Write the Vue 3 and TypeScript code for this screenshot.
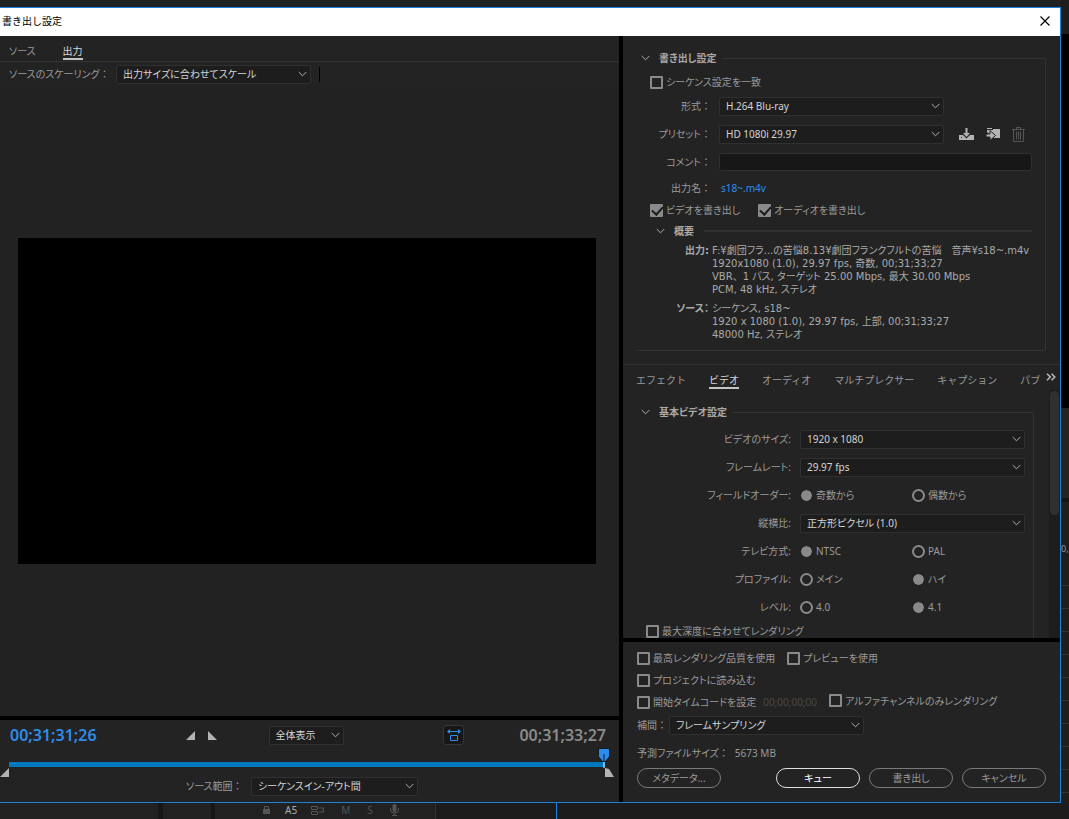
<script setup lang="ts">
import { ref } from 'vue'

interface RadioRow {
  label: string
  name: string
  options: string[]
  value: string
}

const tabs = ['エフェクト', 'ビデオ', 'オーディオ', 'マルチプレクサー', 'キャプション', 'パブ']
const activeTab = ref('ビデオ')
const comment = ref('')
const exportVideo = ref(true)
const exportAudio = ref(true)

const fieldOrder = ref<RadioRow>({ label: 'フィールドオーダー:', name: 'order', options: ['奇数から', '偶数から'], value: '奇数から' })
const radioRows = ref<RadioRow[]>([
  { label: 'テレビ方式:', name: 'tv', options: ['NTSC', 'PAL'], value: 'NTSC' },
  { label: 'プロファイル:', name: 'profile', options: ['メイン', 'ハイ'], value: 'ハイ' },
  { label: 'レベル:', name: 'level', options: ['4.0', '4.1'], value: '4.1' },
])
</script>

<template>
  <div class="desktop">
    <div class="strip-top"></div>
    <main class="dialog">
      <header class="titlebar">
        <h1>書き出し設定</h1>
        <button class="close" aria-label="閉じる">
          <svg width="10" height="10" viewBox="0 0 10 10"><path d="M.5.5l9 9M9.5.5l-9 9" stroke="#000" stroke-width="1.2" /></svg>
        </button>
      </header>
      <div class="body">
        <section class="left">
          <nav class="left-tabs">
            <button>ソース</button>
            <button class="on">出力</button>
          </nav>
          <div class="scaling">
            <label for="scaling">ソースのスケーリング<span class="fw">：</span></label>
            <span class="sel scaling-sel">
              <select id="scaling"><option>出力サイズに合わせてスケール</option></select>
              <svg class="chev" width="9" height="6" viewBox="0 0 9 6"><path d="M.7 1l3.8 3.8L8.3 1" /></svg>
            </span>
            <i class="divider"></i>
          </div>
          <div class="preview"><div class="screen"></div></div>
          <div class="transport">
            <div class="controls">
              <span class="tc blue">00;31;31;26</span>
              <button class="mark in" aria-label="インポイントを設定"><svg width="9" height="9"><path d="M9 0v9H0z" fill="#b4b4b4" /></svg></button>
              <button class="mark" aria-label="アウトポイントを設定"><svg width="9" height="9"><path d="M0 0v1l8 8H0z" fill="#b4b4b4" /><path d="M0 0l9 9H0z" fill="#b4b4b4" /></svg></button>
              <span class="sel zoom-sel">
                <select aria-label="表示倍率"><option>全体表示</option></select>
                <svg class="chev" width="9" height="6" viewBox="0 0 9 6"><path d="M.7 1l3.8 3.8L8.3 1" /></svg>
              </span>
              <button class="aspect" aria-label="縦横比補正">
                <svg width="16" height="14" viewBox="0 0 16 14" fill="none" stroke="#2d8ceb"><path d="M2 3.5h12M4.500 7.500h7v5h-7z" /><path d="M1 3.500l3-2.500v5zM15 3.500l-3-2.500v5z" fill="#2d8ceb" stroke="none" /></svg>
              </button>
              <span class="tc">00;31;33;27</span>
            </div>
            <div class="timeline">
              <div class="range"></div>
              <svg class="head" width="12" height="20" viewBox="0 0 12 20"><path d="M.5.5h11v8l-4 5h-3l-4-5z" fill="#2d8ceb" stroke="#101820" /><path d="M6 6v8" stroke="#0b1f38" /><path d="M6 14v6" stroke="#fff" /></svg>
              <svg class="tri" width="9" height="9"><path d="M9 0v9H0z" fill="#b4b4b4" /></svg>
              <svg class="tri end" width="9" height="9"><path d="M0 0l4 1 5 8H0z" fill="#b4b4b4" /></svg>
            </div>
            <div class="source-range">
              <label for="range">ソース範囲<span class="fw">：</span></label>
              <span class="sel range-sel">
                <select id="range"><option>シーケンスイン-アウト間</option></select>
                <svg class="chev" width="9" height="6" viewBox="0 0 9 6"><path d="M.7 1l3.8 3.8L8.3 1" /></svg>
              </span>
            </div>
          </div>
        </section>

        <section class="right">
          <div class="settings">
            <fieldset class="box">
              <legend><svg class="fold" width="9" height="6" viewBox="0 0 9 6"><path d="M.7 1l3.8 3.8L8.3 1" /></svg>書き出し設定</legend>
              <div class="checks">
                <label class="check"><input type="checkbox" />シーケンス設定を一致</label>
              </div>
              <div class="row">
                <label class="lab" for="format">形式<span class="fw">：</span></label>
                <span class="sel wide">
                  <select id="format"><option>H.264 Blu-ray</option></select>
                  <svg class="chev" width="9" height="6" viewBox="0 0 9 6"><path d="M.7 1l3.8 3.8L8.3 1" /></svg>
                </span>
              </div>
              <div class="row">
                <label class="lab" for="preset">プリセット<span class="fw">：</span></label>
                <span class="sel wide">
                  <select id="preset"><option>HD 1080i 29.97</option></select>
                  <svg class="chev" width="9" height="6" viewBox="0 0 9 6"><path d="M.7 1l3.8 3.8L8.3 1" /></svg>
                </span>
                <div class="tools">
                  <button aria-label="プリセットを保存"><svg width="15" height="14" viewBox="0 0 15 14" fill="#b4b4b4"><path d="M0 8h4l3.500 3.500L11 8h4v5H0z" /><path d="M6.500 1h2v5h2.500l-3.500 4-3.500-4h2.500z" /><path d="M2 10h1v1H2z" fill="#232323" /></svg></button>
                  <button aria-label="プリセットを読み込み"><svg width="14" height="14" viewBox="0 0 14 14" fill="#b4b4b4"><path d="M1 1h5v1H1zM1 3h6V2h7v9H8L1 5z" /><path d="M0 7h4V3.500L9.500 8.500 4 13.500V10H0z" stroke="#232323" /></svg></button>
                  <button aria-label="プリセットを削除" disabled><svg width="13" height="15" viewBox="0 0 13 15" fill="none" stroke="#555"><path d="M0 2.500h13M4.500 2V.5h4V2M1.500 3v11.500h10V3M4.500 4.500v8M6.500 4.500v8M8.500 4.500v8" /></svg></button>
                </div>
              </div>
              <div class="row">
                <label class="lab" for="comment">コメント<span class="fw">：</span></label>
                <input id="comment" v-model="comment" class="text" type="text" />
              </div>
              <div class="row short">
                <span class="lab">出力名<span class="fw">：</span></span>
                <a href="#">s18~.m4v</a>
              </div>
              <div class="checks">
                <label class="check"><input v-model="exportVideo" type="checkbox" />ビデオを書き出し</label>
                <label class="check"><input v-model="exportAudio" type="checkbox" />オーディオを書き出し</label>
              </div>
              <div class="summary-head">
                <svg class="fold" width="9" height="6" viewBox="0 0 9 6"><path d="M.7 1l3.8 3.8L8.3 1" /></svg>
                <b>概要</b><i></i>
              </div>
              <dl class="summary">
                <dt>出力:</dt>
                <dd>F:¥劇団フラ...の苦悩8.13¥劇団フランクフルトの苦悩　音声¥s18~.m4v<br />1920x1080 (1.0), 29.97 fps, 奇数, 00;31;33;27<br />VBR<span class="fw">、</span>1 パス, ターゲット 25.00 Mbps, 最大 30.00 Mbps<br />PCM, 48 kHz, ステレオ</dd>
                <dt>ソース：</dt>
                <dd>シーケンス, s18~<br />1920 x 1080 (1.0), 29.97 fps, 上部, 00;31;33;27<br />48000 Hz, ステレオ</dd>
              </dl>
            </fieldset>

            <nav class="tabs">
              <div class="tab-list">
                <button v-for="t in tabs" :key="t" :class="{ on: t === activeTab }" @click="activeTab = t">{{ t }}</button>
              </div>
              <button class="more" aria-label="その他のタブ"><svg width="10" height="8" viewBox="0 0 10 8" fill="none" stroke="#b8b8b8" stroke-width="1.600"><path d="M1 .7L4.300 4 1 7.300M5.500 .7L8.800 4 5.500 7.300" /></svg></button>
            </nav>

            <div class="scroll">
              <fieldset class="box video">
                <legend><svg class="fold" width="9" height="6" viewBox="0 0 9 6"><path d="M.7 1l3.8 3.8L8.3 1" /></svg>基本ビデオ設定</legend>
                <div class="row">
                  <label class="lab" for="size">ビデオのサイズ:</label>
                  <span class="sel wide">
                    <select id="size"><option>1920 x 1080</option></select>
                    <svg class="chev" width="9" height="6" viewBox="0 0 9 6"><path d="M.7 1l3.8 3.8L8.3 1" /></svg>
                  </span>
                </div>
                <div class="row">
                  <label class="lab" for="fps">フレームレート:</label>
                  <span class="sel wide">
                    <select id="fps"><option>29.97 fps</option></select>
                    <svg class="chev" width="9" height="6" viewBox="0 0 9 6"><path d="M.7 1l3.8 3.8L8.3 1" /></svg>
                  </span>
                </div>
                <div class="row">
                  <span class="lab">{{ fieldOrder.label }}</span>
                  <label v-for="o in fieldOrder.options" :key="o" class="radio"><input v-model="fieldOrder.value" type="radio" :name="fieldOrder.name" :value="o" />{{ o }}</label>
                </div>
                <div class="row">
                  <label class="lab" for="aspect">縦横比:</label>
                  <span class="sel wide">
                    <select id="aspect"><option>正方形ピクセル (1.0)</option></select>
                    <svg class="chev" width="9" height="6" viewBox="0 0 9 6"><path d="M.7 1l3.8 3.8L8.3 1" /></svg>
                  </span>
                </div>
                <div v-for="r in radioRows" :key="r.name" class="row">
                  <span class="lab">{{ r.label }}</span>
                  <label v-for="o in r.options" :key="o" class="radio"><input v-model="r.value" type="radio" :name="r.name" :value="o" />{{ o }}</label>
                </div>
                <div class="checks depth">
                  <label class="check"><input type="checkbox" />最大深度に合わせてレンダリング</label>
                </div>
              </fieldset>
              <div class="track"><div class="thumb"></div></div>
            </div>
          </div>

          <footer class="actions">
            <div class="checks">
              <label class="check"><input type="checkbox" />最高レンダリング品質を使用</label>
              <label class="check"><input type="checkbox" />プレビューを使用</label>
            </div>
            <div class="checks">
              <label class="check"><input type="checkbox" />プロジェクトに読み込む</label>
            </div>
            <div class="checks">
              <label class="check"><input type="checkbox" />開始タイムコードを設定</label>
              <span class="dim">00;00;00;00</span>
              <label class="check alpha"><input type="checkbox" />アルファチャンネルのみレンダリング</label>
            </div>
            <div class="interp">
              <label for="interp">補間<span class="fw">：</span></label>
              <span class="sel interp-sel">
                <select id="interp"><option>フレームサンプリング</option></select>
                <svg class="chev" width="9" height="6" viewBox="0 0 9 6"><path d="M.7 1l3.8 3.8L8.3 1" /></svg>
              </span>
            </div>
            <div class="filesize"><span>予測ファイルサイズ<span class="fw">：</span></span><span>5673 MB</span></div>
            <div class="buttons">
              <button class="pill meta">メタデータ...</button>
              <button class="pill primary">キュー</button>
              <button class="pill">書き出し</button>
              <button class="pill">キャンセル</button>
            </div>
          </footer>
        </section>
      </div>
    </main>

    <aside class="strip-right">
      <div class="black"></div>
      <div class="mini"></div>
      <div class="ruler">0,</div>
      <div v-for="n in 10" :key="n" class="lane"></div>
    </aside>

    <div class="strip-bottom">
      <div class="cell a"></div>
      <div class="cell b"></div>
      <div class="cell c">
        <svg width="9" height="10" viewBox="0 0 9 10"><path d="M1 4h7v5H1z" fill="#555" /><path d="M2.500 4V1.500h4V4" fill="none" stroke="#555" /></svg>
        <span class="track-name">A5</span>
        <svg width="13" height="9" viewBox="0 0 13 9" fill="none" stroke="#555"><path d="M.5.5h6v3h-6zM.5 5.500h6v3h-6zM8 2h4.500v4H8" /></svg>
        <span>M</span>
        <span>S</span>
        <svg width="9" height="12" viewBox="0 0 9 12"><rect x="2.500" width="4" height="8" rx="2" fill="#555" /><path d="M.5 4v2q0 3 4 3t4-3V4M4.500 9v3M2 11.500h5" fill="none" stroke="#555" /></svg>
      </div>
      <div class="cell d"></div>
      <div class="cell e"></div>
    </div>
  </div>
</template>

<style>
html,
body {
  background: #1e1e1e;
}
</style>

<style scoped>
* {
  box-sizing: border-box;
}
.desktop {
  display: grid;
  grid-template-columns: 1fr 8px;
  grid-template-rows: 7px 1fr 16px;
  height: 100vh;
  min-height: 700px;
  background: #1e1e1e;
  color: #9a9a9a;
  font-family: "Noto Sans", "Noto Sans CJK JP", sans-serif;
  font-feature-settings: "palt";
  font-size: 10px;
  line-height: 14px;
  overflow: hidden;
}
button,
input,
select {
  font: inherit;
  font-feature-settings: inherit;
  color: inherit;
  margin: 0;
}
button {
  padding: 0;
  border: 0;
  background: none;
  white-space: nowrap;
}
label,
span {
  white-space: nowrap;
}
svg {
  display: block;
}
.fw {
  font-feature-settings: normal;
}
.strip-top {
  background: #222;
}
.dialog {
  grid-column: 1;
  grid-row: 2;
  min-height: 0;
  display: flex;
  flex-direction: column;
  border: solid #1d82dc;
  border-width: 1px 1px 1px 0;
  background: #000;
}
.titlebar {
  flex: none;
  height: 28px;
  display: flex;
  align-items: center;
  justify-content: space-between;
  padding: 0 10px 2px 2px;
  background: #fff;
  color: #000;
}
h1 {
  margin: 0;
  font-size: 10px;
  font-weight: 400;
  font-feature-settings: normal;
}
.body {
  flex: 1;
  min-height: 0;
  display: flex;
  gap: 4px;
}
.left {
  flex: 1;
  min-width: 0;
  display: flex;
  flex-direction: column;
}
.right {
  flex: none;
  width: 437px;
  display: flex;
  flex-direction: column;
  gap: 4px;
}
.left-tabs {
  flex: none;
  display: flex;
  gap: 27px;
  height: 26px;
  padding: 7px 9px 0;
  border-bottom: 1px solid #333;
  background: #232323;
}
.left-tabs button {
  height: 17px;
  border-bottom: 2px solid transparent;
}
.left-tabs .on,
.tabs .on {
  color: #d8d8d8;
  border-bottom-color: #c4c4c4;
}
.scaling {
  flex: none;
  display: flex;
  align-items: center;
  height: 24px;
  padding-left: 9px;
  background: #232323;
}
.scaling label {
  width: 107px;
}
.divider {
  width: 1px;
  height: 15px;
  margin-left: 8px;
  background: #000;
}
.sel {
  position: relative;
  display: block;
  height: 19px;
}
.sel select {
  appearance: none;
  display: block;
  width: 100%;
  height: 100%;
  padding: 0 20px 0 6px;
  border: 1px solid #303030;
  border-radius: 2px;
  background: #1d1d1d;
  color: #d4d4d4;
}
.chev {
  position: absolute;
  right: 4px;
  top: 6px;
  pointer-events: none;
}
.chev path,
.fold path {
  fill: none;
  stroke: #b0b0b0;
}
.scaling-sel {
  width: 195px;
}
.preview {
  flex: 1;
  min-height: 0;
  display: flex;
  align-items: center;
  padding: 0 23px 0 18px;
  background: #222;
}
.screen {
  width: 100%;
  aspect-ratio: 16 / 9;
  background: #000;
}
.transport {
  flex: none;
  height: 82px;
  margin-top: 4px;
  background: #232323;
}
.controls {
  display: flex;
  align-items: center;
  height: 30px;
  padding: 0 13px 0 10px;
}
.tc {
  font-size: 16px;
  font-weight: 600;
  line-height: 20px;
  color: #8a8a8a;
}
.tc.blue {
  color: #2d8ceb;
}
.mark {
  margin-right: 13px;
}
.mark.in {
  margin-left: 89px;
}
.zoom-sel {
  width: 75px;
  margin-left: 39px;
}
.aspect {
  width: 21px;
  height: 20px;
  display: grid;
  place-items: center;
  margin: 0 55px 0 auto;
  border: 1px solid #363636;
  border-radius: 3px;
  background: #171717;
}
.timeline {
  position: relative;
  height: 26px;
  padding: 12px 14px 0 9px;
}
.range {
  height: 5px;
  background: #0078bd;
}
.head {
  position: absolute;
  right: 9px;
  top: -2px;
}
.tri {
  position: absolute;
  left: 0;
  top: 18px;
}
.tri.end {
  left: auto;
  right: 5px;
}
.source-range {
  display: flex;
  align-items: center;
  height: 20px;
  padding-left: 186px;
}
.source-range label {
  width: 65px;
}
.range-sel {
  width: 167px;
}
.settings {
  flex: 1;
  min-height: 0;
  display: flex;
  flex-direction: column;
  padding-top: 14px;
  background: #232323;
}
.box {
  flex: none;
  min-width: 0;
  margin: 0 14px 0 13px;
  padding: 6px 13px 9px 14px;
  border: 1px solid #333;
  border-left: 0;
  border-radius: 2px;
}
legend {
  display: flex;
  align-items: center;
  gap: 9px;
  height: 16px;
  margin-left: -14px;
  padding: 0 6px 0 5px;
  font-weight: 700;
  color: #a8a8a8;
}
.checks {
  display: flex;
  align-items: center;
  gap: 18px;
  height: 20px;
}
.check {
  display: flex;
  align-items: center;
  gap: 3px;
}
.check input {
  appearance: none;
  width: 13px;
  height: 13px;
  border: 2px solid #8a8a8a;
  border-radius: 1px;
}
.check input:checked {
  display: grid;
  place-items: center;
  background: #8a8a8a;
}
.check input:checked::after {
  content: "";
  width: 9px;
  height: 5px;
  margin-bottom: 4px;
  border: solid #1c1c1c;
  border-width: 0 0 2px 2px;
  transform: rotate(-48deg);
}
.row {
  display: flex;
  align-items: center;
  height: 28px;
}
.row.short {
  height: 24px;
}
.lab {
  flex: none;
  width: 61px;
  margin-right: 8px;
  text-align: right;
}
.wide {
  flex: none;
  width: 225px;
}
.tools {
  display: flex;
  align-items: center;
  gap: 12px;
  margin-left: 15px;
}
.text {
  flex: 1;
  min-width: 0;
  height: 18px;
  padding: 0 5px;
  border: 1px solid #303030;
  border-radius: 3px;
  background: #171717;
}
a {
  margin-left: 2px;
  color: #2d8ceb;
  text-decoration: none;
}
.summary-head {
  display: flex;
  align-items: center;
  height: 22px;
  padding-left: 6px;
}
.summary-head b {
  margin: 0 10px 0 9px;
  color: #a8a8a8;
}
.summary-head i {
  flex: 1;
  height: 2px;
  background: #303030;
}
.summary {
  display: grid;
  grid-template-columns: 59px 1fr;
  column-gap: 3px;
  row-gap: 6px;
  margin: 2px -13px 0 0;
  font-family: "DejaVu Sans", "Noto Sans CJK JP", sans-serif;
  line-height: 13px;
  color: #aaa;
  white-space: nowrap;
}
.summary dt {
  font-weight: 700;
  text-align: right;
}
.summary dd {
  margin: 0;
}
.tabs {
  flex: none;
  display: flex;
  align-items: flex-start;
  gap: 5px;
  height: 26px;
  margin-top: 13px;
  padding: 0 4px 0 13px;
  border-top: 1px solid #303030;
}
.tab-list {
  flex: 1;
  min-width: 0;
  display: flex;
  gap: 23px;
  padding-top: 7px;
  font-feature-settings: normal;
}
.tab-list button {
  height: 17px;
  border-bottom: 2px solid transparent;
}
.more {
  padding-top: 8px;
}
.scroll {
  flex: 1;
  min-height: 0;
  display: flex;
  align-items: flex-start;
  padding-top: 14px;
  overflow: hidden;
}
.video {
  flex: 1;
  margin-right: 15px;
  padding: 5px 9px 40px 10px;
}
.video legend {
  margin-left: -10px;
}
.video .lab {
  width: 145px;
  margin-right: 9px;
}
.radio {
  display: flex;
  align-items: center;
  gap: 3px;
  width: 114px;
}
.radio input {
  appearance: none;
  width: 13px;
  height: 13px;
  border: 2px solid #8a8a8a;
  border-radius: 50%;
}
.radio input:checked {
  border-width: 1px;
  border-color: #232323;
  background: #8a8a8a;
  background-clip: padding-box;
}
.track {
  width: 11px;
  height: 2000px;
  margin-top: -14px;
  padding: 1px;
  background: #1d1d1d;
}
.thumb {
  height: 124px;
  border-radius: 5px;
  background: #303030;
}
.actions {
  flex: none;
  height: 160px;
  padding: 5px 14px 0;
  background: #232323;
}
.actions .checks {
  height: 22px;
  gap: 12px;
}
.dim {
  margin-left: -5px;
  color: #484848;
}
.alpha {
  padding-bottom: 3px;
}
.interp {
  display: flex;
  align-items: center;
  height: 24px;
}
.interp label {
  width: 32px;
}
.interp-sel {
  width: 195px;
}
.filesize {
  display: flex;
  align-items: center;
  gap: 6px;
  height: 31px;
}
.buttons {
  display: flex;
  gap: 9px;
}
.pill {
  width: 84px;
  height: 20px;
  border: 1px solid #7a7a7a;
  border-radius: 10px;
}
.meta {
  margin-right: auto;
}
.primary {
  border-color: #e0e0e0;
  color: #fff;
}
.strip-right {
  grid-column: 2;
  grid-row: 1 / 3;
  display: flex;
  flex-direction: column;
  overflow: hidden;
  padding-top: 34px;
}
.black {
  flex: none;
  height: 374px;
  background: #000;
}
.mini {
  flex: none;
  height: 94px;
  border-bottom: 4px solid #141414;
  background: #232323;
}
.ruler {
  flex: none;
  height: 84px;
  padding-top: 40px;
  border-bottom: 1px solid #333;
  font-size: 9px;
}
.lane {
  flex: none;
  height: 23px;
  border-bottom: 1px solid #333;
}
.strip-bottom {
  grid-column: 1 / 3;
  grid-row: 3;
  display: flex;
  overflow: hidden;
}
.cell {
  background: #212121;
}
.a {
  width: 163px;
  border-right: 5px solid #161616;
}
.b {
  width: 52px;
  border-right: 4px solid #161616;
}
.c {
  display: flex;
  align-items: center;
  gap: 17px;
  width: 221px;
  padding: 0 0 2px 47px;
  border-right: 1px solid #333;
  color: #555;
}
.c .track-name {
  margin: 0 -3px;
  color: #aaa;
}
.d {
  width: 121px;
  border-right: 1px solid #1d82dc;
  background: #1c1c1c;
}
.e {
  flex: 1;
  background: #1c1c1c;
}
</style>
